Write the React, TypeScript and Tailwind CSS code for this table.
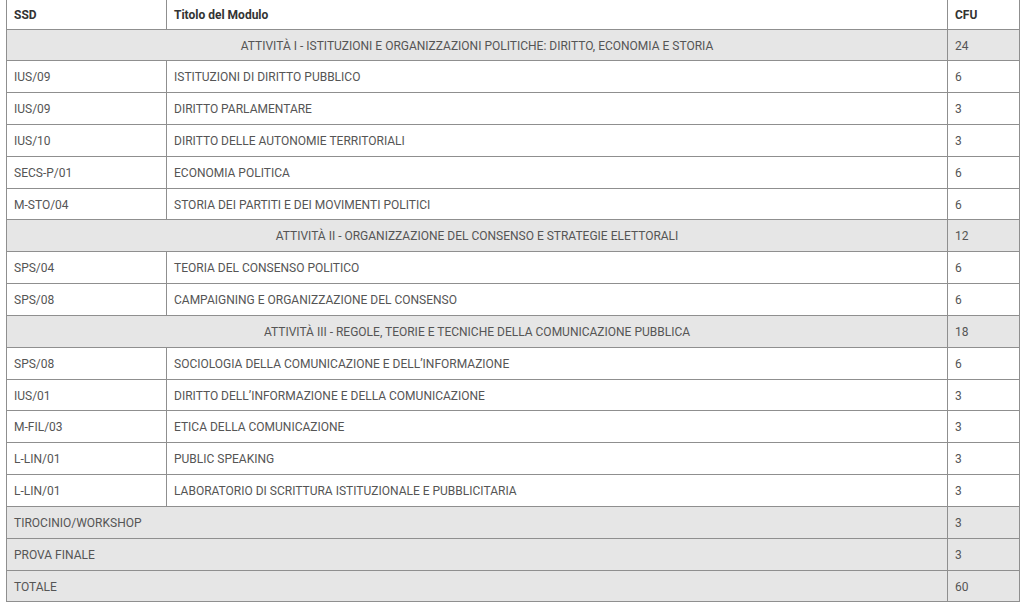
type Row =
  | { kind: 'module'; ssd: string; title: string; cfu: string }
  | { kind: 'section'; title: string; cfu: string }
  | { kind: 'total'; title: string; cfu: string };

const rows: Row[] = [
  { kind: 'section', title: 'ATTIVITÀ I - ISTITUZIONI E ORGANIZZAZIONI POLITICHE: DIRITTO, ECONOMIA E STORIA', cfu: '24' },
  { kind: 'module', ssd: 'IUS/09', title: 'ISTITUZIONI DI DIRITTO PUBBLICO', cfu: '6' },
  { kind: 'module', ssd: 'IUS/09', title: 'DIRITTO PARLAMENTARE', cfu: '3' },
  { kind: 'module', ssd: 'IUS/10', title: 'DIRITTO DELLE AUTONOMIE TERRITORIALI', cfu: '3' },
  { kind: 'module', ssd: 'SECS-P/01', title: 'ECONOMIA POLITICA', cfu: '6' },
  { kind: 'module', ssd: 'M-STO/04', title: 'STORIA DEI PARTITI E DEI MOVIMENTI POLITICI', cfu: '6' },
  { kind: 'section', title: 'ATTIVITÀ II - ORGANIZZAZIONE DEL CONSENSO E STRATEGIE ELETTORALI', cfu: '12' },
  { kind: 'module', ssd: 'SPS/04', title: 'TEORIA DEL CONSENSO POLITICO', cfu: '6' },
  { kind: 'module', ssd: 'SPS/08', title: 'CAMPAIGNING E ORGANIZZAZIONE DEL CONSENSO', cfu: '6' },
  { kind: 'section', title: 'ATTIVITÀ III - REGOLE, TEORIE E TECNICHE DELLA COMUNICAZIONE PUBBLICA', cfu: '18' },
  { kind: 'module', ssd: 'SPS/08', title: 'SOCIOLOGIA DELLA COMUNICAZIONE E DELL’INFORMAZIONE', cfu: '6' },
  { kind: 'module', ssd: 'IUS/01', title: 'DIRITTO DELL’INFORMAZIONE E DELLA COMUNICAZIONE', cfu: '3' },
  { kind: 'module', ssd: 'M-FIL/03', title: 'ETICA DELLA COMUNICAZIONE', cfu: '3' },
  { kind: 'module', ssd: 'L-LIN/01', title: 'PUBLIC SPEAKING', cfu: '3' },
  { kind: 'module', ssd: 'L-LIN/01', title: 'LABORATORIO DI SCRITTURA ISTITUZIONALE E PUBBLICITARIA', cfu: '3' },
  { kind: 'total', title: 'TIROCINIO/WORKSHOP', cfu: '3' },
  { kind: 'total', title: 'PROVA FINALE', cfu: '3' },
  { kind: 'total', title: 'TOTALE', cfu: '60' },
];

const cell = 'border border-[#8f8f8f] px-[7px] pt-[8px] pb-[6px] leading-[16.83px] align-middle';

export default function App() {
  return (
    <div className="min-h-[614px] bg-white pl-[6px] pr-[5px] font-['Roboto',sans-serif] text-[12px] text-[#555]">
      <table className="w-[1013px] table-fixed border-collapse">
        <colgroup>
          <col className="w-[160px]" />
          <col className="w-[781px]" />
          <col className="w-[72px]" />
        </colgroup>
        <thead>
          <tr className="h-[29px] font-bold text-[#333]">
            <th className="border-x border-b border-[#8f8f8f] px-[7px] pt-[2px] text-left">SSD</th>
            <th className="border-x border-b border-[#8f8f8f] px-[7px] pt-[2px] text-left">Titolo del Modulo</th>
            <th className="border-x border-b border-[#8f8f8f] px-[7px] pt-[2px] text-left">CFU</th>
          </tr>
        </thead>
        <tbody>
          {rows.map((r, i) =>
            r.kind === 'module' ? (
              <tr key={i} className="bg-white">
                <td className={cell}>{r.ssd}</td>
                <td className={cell}>{r.title}</td>
                <td className={cell}>{r.cfu}</td>
              </tr>
            ) : (
              <tr key={i} className="bg-[#e6e6e6]">
                <td colSpan={2} className={`${cell} ${r.kind === 'section' ? 'text-center' : 'text-left'}`}>
                  {r.title}
                </td>
                <td className={cell}>{r.cfu}</td>
              </tr>
            ),
          )}
        </tbody>
      </table>
    </div>
  );
}
